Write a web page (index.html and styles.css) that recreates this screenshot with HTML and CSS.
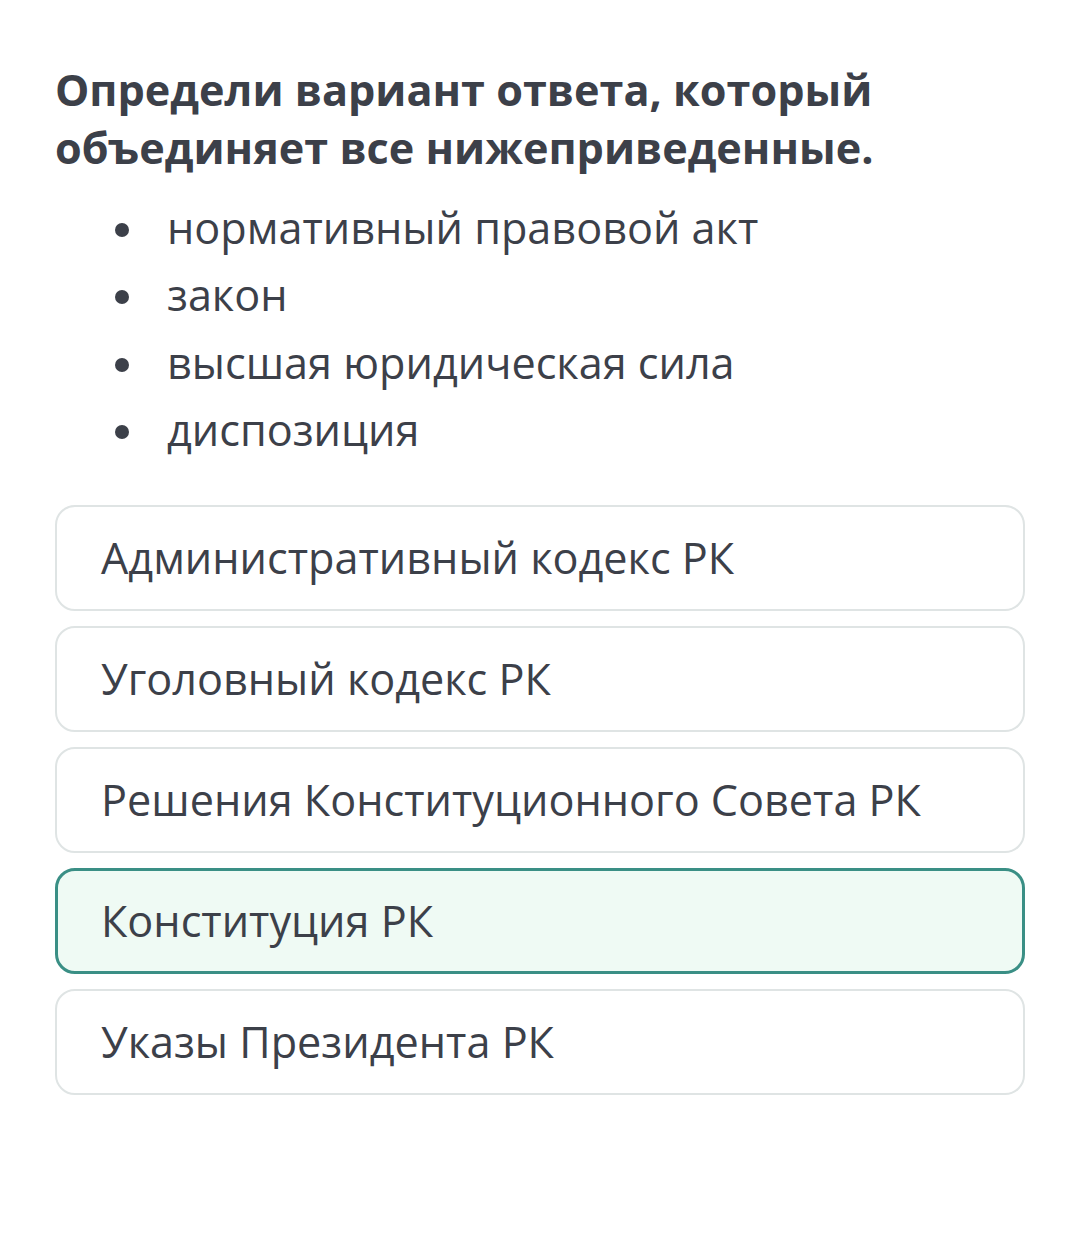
FILE: index.html
```html
<!DOCTYPE html>
<html lang="ru">
<head>
<meta charset="utf-8">
<link rel="stylesheet" href="styles.css">
</head>
<body>
<div class="page">
  <h1 class="title">Определи вариант ответа, который объединяет все нижеприведенные.</h1>
  <ul class="items">
    <li>нормативный правовой акт</li>
    <li>закон</li>
    <li>высшая юридическая сила</li>
    <li>диспозиция</li>
  </ul>
  <div class="options">
    <div class="option">Административный кодекс РК</div>
    <div class="option">Уголовный кодекс РК</div>
    <div class="option">Решения Конституционного Совета РК</div>
    <div class="option selected">Конституция РК</div>
    <div class="option">Указы Президента РК</div>
  </div>
</div>
</body>
</html>
```

FILE: styles.css
```css
html, body {
  margin: 0;
  padding: 0;
  background: #ffffff;
}
body {
  font-family: "Open Sans", "Noto Sans", sans-serif;
  color: #3c4049;
}
.page {
  padding: 61px 55px 0 55px;
}
.title {
  margin: 0;
  font-size: 43.2px;
  font-weight: 700;
  line-height: 58px;
  color: #3c4049;
}
.items {
  list-style: none;
  margin: 17px 0 0 0;
  padding: 0 0 0 60px;
  font-size: 43.2px;
  line-height: 67.4px;
}
.items li {
  display: flex;
  align-items: center;
}
.items li::before {
  content: "";
  width: 14px;
  height: 14px;
  border-radius: 50%;
  background: #3c4049;
  margin-right: 38px;
  flex: none;
  position: relative;
  top: 2px;
}
.options {
  margin-top: 41px;
  display: flex;
  flex-direction: column;
  gap: 15px;
  width: 970px;
}
.option {
  box-sizing: border-box;
  height: 106px;
  border: 2px solid #dfe4e4;
  border-radius: 20px;
  display: flex;
  align-items: center;
  padding-left: 44px;
  font-size: 43.2px;
  color: #3c4049;
}
.option.selected {
  border: 3px solid #3a8f85;
  background: #effaf4;
  padding-left: 43px;
}
```
